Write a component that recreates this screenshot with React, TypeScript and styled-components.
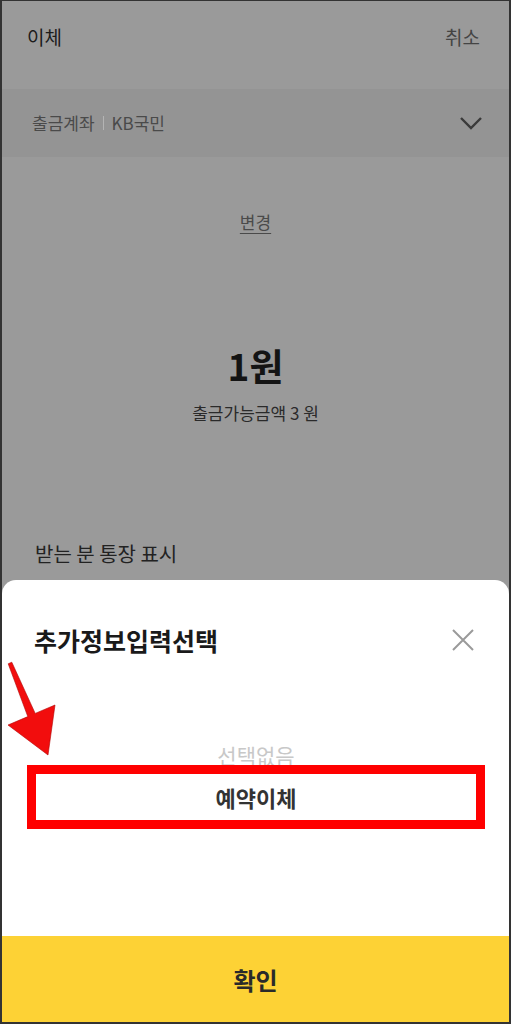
import styled, { createGlobalStyle } from "styled-components";

const GlobalStyle = createGlobalStyle`
  html, body {
    margin: 0;
    padding: 0;
    background: #9a9a9a;
  }
  * {
    box-sizing: border-box;
  }
  body {
    font-family: "Noto Sans CJK KR", "Noto Sans", sans-serif;
  }
`;

function Chevron() {
  return (
    <svg width="24" height="14" viewBox="0 0 24 14">
      <path d="M2 2 L12 12 L22 2" fill="none" stroke="#3a3a3a" strokeWidth="2.4" />
    </svg>
  );
}

function CloseIcon() {
  return (
    <svg width="24" height="24" viewBox="0 0 24 24">
      <path d="M2 2 L22 22 M22 2 L2 22" fill="none" stroke="#9a9a9a" strokeWidth="2" />
    </svg>
  );
}

function RedArrow() {
  return (
    <ArrowSvg width="60" height="100" viewBox="0 660 60 100">
      <polygon
        points="8.2,664.8 11.8,663.2 35.2,714.4 55,706 48,756 8,726 27.8,717.6"
        fill="#f20d0d"
        stroke="#b00000"
        strokeWidth="0.6"
      />
    </ArrowSvg>
  );
}

export default function App() {
  return (
    <Frame>
      <GlobalStyle />
      <Page>
        <Header>
          <HeaderTitle>이체</HeaderTitle>
          <HeaderAction>취소</HeaderAction>
        </Header>
        <AccountBar>
          <AccountLabel>
            출금계좌<Divider />KB국민
          </AccountLabel>
          <Chevron />
        </AccountBar>
        <Center>
          <ChangeLink>변경</ChangeLink>
          <Amount>1원</Amount>
          <Available>출금가능금액 3 원</Available>
        </Center>
        <SectionLabel>받는 분 통장 표시</SectionLabel>
      </Page>

      <Sheet>
        <SheetHeader>
          <SheetTitle>추가정보입력선택</SheetTitle>
          <CloseIcon />
        </SheetHeader>
        <Picker>
          <PickerItem>선택없음</PickerItem>
          <Selected>예약이체</Selected>
        </Picker>
        <Spacer />
        <ConfirmButton>확인</ConfirmButton>
        <RedArrow />
      </Sheet>
    </Frame>
  );
}

const Frame = styled.div`
  position: relative;
  width: 511px;
  height: 1024px;
  display: flex;
  flex-direction: column;
  border: 2px solid #333;
  border-top-width: 1px;
  background: #9a9a9a;
  overflow: hidden;
`;

const Page = styled.div`
  height: 579px;
  display: flex;
  flex-direction: column;
  overflow: hidden;
`;

const Header = styled.div`
  height: 88px;
  display: flex;
  justify-content: space-between;
  align-items: flex-start;
  padding: 22px 29px 0 25px;
`;

const HeaderTitle = styled.span`
  font-size: 19px;
  line-height: 28px;
  color: #1c1c1c;
`;

const HeaderAction = styled.span`
  font-size: 19px;
  line-height: 28px;
  color: #444;
`;

const AccountBar = styled.div`
  height: 68px;
  display: flex;
  align-items: center;
  justify-content: space-between;
  padding: 0 26px 0 30px;
  background: #949494;
`;

const AccountLabel = styled.span`
  display: flex;
  align-items: center;
  font-size: 17px;
  line-height: 24px;
  color: #4a4a4a;
`;

const Divider = styled.span`
  display: inline-block;
  width: 1px;
  height: 14px;
  margin: 0 8px;
  background: #b4b4b4;
`;

const Center = styled.div`
  display: flex;
  flex-direction: column;
  align-items: center;
`;

const ChangeLink = styled.span`
  margin-top: 53px;
  font-size: 17px;
  line-height: 24px;
  color: #4a4a4a;
  text-decoration: underline;
  text-underline-offset: 4px;
`;

const Amount = styled.span`
  margin-top: 107px;
  font-size: 37px;
  line-height: 48px;
  font-weight: 700;
  color: #141414;
`;

const Available = styled.span`
  margin-top: 12px;
  font-size: 17px;
  line-height: 24px;
  color: #2a2a2a;
`;

const SectionLabel = styled.span`
  margin-top: 114px;
  padding-left: 33px;
  font-size: 20px;
  line-height: 30px;
  color: #222;
`;

const Sheet = styled.div`
  position: relative;
  flex: 1;
  display: flex;
  flex-direction: column;
  background: #fff;
  border-radius: 14px 14px 0 0;
`;

const SheetHeader = styled.div`
  display: flex;
  justify-content: space-between;
  align-items: center;
  padding: 44px 34px 0 32px;
`;

const SheetTitle = styled.span`
  font-size: 25px;
  line-height: 32px;
  font-weight: 700;
  color: #1a1a1a;
`;

const Picker = styled.div`
  display: flex;
  flex-direction: column;
  align-items: center;
  margin-top: 87px;
  padding: 0 24px 0 25px;
`;

const PickerItem = styled.span`
  font-size: 21px;
  line-height: 24px;
  color: #c8c8c8;
`;

const Selected = styled.div`
  position: relative;
  z-index: 1;
  width: 100%;
  height: 64px;
  margin-top: -2px;
  display: flex;
  align-items: center;
  justify-content: center;
  border: 9px solid #ff0000;
  background: #fff;
  font-size: 22px;
  font-weight: 700;
  color: #333;
`;

const Spacer = styled.div`
  flex: 1;
`;

const ConfirmButton = styled.div`
  height: 86px;
  display: flex;
  align-items: center;
  justify-content: center;
  background: #fdd235;
  font-size: 24px;
  font-weight: 700;
  color: #2a2a2a;
`;

const ArrowSvg = styled.svg`
  position: absolute;
  left: -2px;
  top: 79px;
  z-index: 2;
`;
